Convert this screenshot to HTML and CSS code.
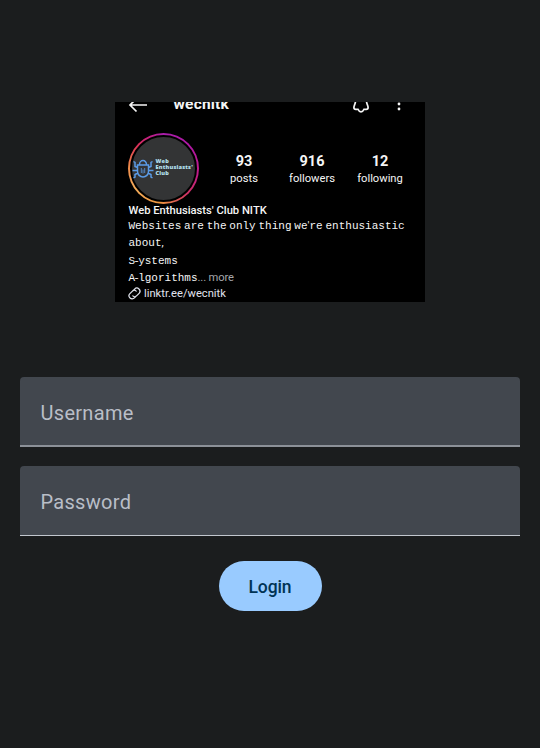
FILE: index.html
```html
<!DOCTYPE html>
<html lang="en">
<head>
<meta charset="utf-8">
<title>Login</title>
<link rel="stylesheet" href="styles.css">
</head>
<body>
<main class="screen">
  <section class="profile">
    <header class="bar">
      <svg class="back" width="20" height="16" viewBox="0 0 20 16"><path d="M19 8H2M8.500 1.500L2 8l6.500 6.500" fill="none" stroke="#f5f5f5" stroke-width="1.700"/></svg>
      <span class="handle">wecnitk</span>
      <svg class="bell" width="18" height="20" viewBox="0 0 18 20"><path d="M3.500 7a5.500 5.500 0 0 1 11 0c0 3 1.600 4.500 1.600 6.500 0 1.200-.8 1.800-1.900 1.800H12c-.7 1.700-1.600 2.500-3 2.500s-2.300-.8-3-2.500H3.800c-1.100 0-1.900-.6-1.900-1.800C1.900 11.500 3.500 10 3.500 7z" fill="none" stroke="#f5f5f5" stroke-width="1.700"/></svg>
      <svg class="dots" width="4" height="16" viewBox="0 0 4 16" fill="#f5f5f5"><circle cx="2" cy="3" r="1.400"/><circle cx="2" cy="8" r="1.400"/><circle cx="2" cy="13" r="1.400"/></svg>
    </header>
    <div class="summary">
      <div class="ring">
        <div class="avatar">
          <svg class="bug" width="22" height="20" viewBox="0 0 22 20" fill="none" stroke="#5b9be6" stroke-width="1.500">
            <path d="M7.500 5.500a3.500 4 0 0 1 7 0M5.500 6h11v6.500a5.500 5.500 0 0 1-11 0zM5.500 8.500L3 7.500V3.500L1.500 2.500M16.500 8.500L19 7.500V3.500l1.500-1M5.500 11.500H.5M16.500 11.500h5M6 14l-3 1.500V18l-1.500 1M16 14l3 1.500V18l1.500 1"/>
            <path d="M9.300 9v5M12.700 9v5M11 10.500v4" stroke-width=".8"/>
          </svg>
          <div class="logo-text"><span>Web</span><span>Enthusiasts'</span><span>Club</span></div>
        </div>
      </div>
      <div class="stat posts"><b>93</b><span>posts</span></div>
      <div class="stat followers"><b>916</b><span>followers</span></div>
      <div class="stat following"><b>12</b><span>following</span></div>
    </div>
    <div class="name">Web Enthusiasts' Club NITK</div>
    <div class="bio">Websites are the only thing we<span class="apos">'</span>re enthusiastic<br>about<span class="apos">,</span><br>S<span class="dash">-</span>ystems<br>A<span class="dash">-</span>lgorithms<span class="more">... more</span></div>
    <div class="link">
      <svg width="13" height="13" viewBox="0 0 13 13" fill="none" stroke="#e4e6ef" stroke-width="1.200" stroke-linecap="round"><path d="M5.300 3.500l1.300-1.400a3 3 0 0 1 4.500 4.200L8.800 8.700a2.900 2.900 0 0 1-4 .2M7.700 9.500l-1.300 1.400a3 3 0 0 1-4.500-4.200l2.300-2.400a2.900 2.900 0 0 1 4-.2"/></svg>
      <span>linktr.ee/wecnitk</span>
    </div>
  </section>
  <form class="form">
    <input class="field" type="text" placeholder="Username" aria-label="Username">
    <input class="field field-password" type="password" placeholder="Password" aria-label="Password">
    <button class="login" type="button">Login</button>
  </form>
</main>
</body>
</html>
```
FILE: styles.css
```css
* { box-sizing: border-box; }
body { margin: 0; background: #1b1d1e; font-family: Roboto, sans-serif; }
.screen { height: 748px; padding: 102px 20px 0; overflow: hidden; }
.profile { width: 310px; height: 200px; margin: 0 auto; padding: 0 13px; background: #000; color: #f5f5f5; overflow: hidden; }
.bar { display: flex; align-items: flex-start; height: 30.5px; }
.bar svg { flex: none; }
.back { margin-top: -5px; }
.handle { width: 56px; margin: -8px 0 0 25.5px; font-size: 15.5px; line-height: 20px; font-weight: 700; letter-spacing: .2px; }
.bell { margin: -8.5px 0 0 122px; }
.dots { margin: -6px 0 0 27px; }
.summary { display: flex; height: 71.5px; }
.ring { flex: none; width: 71px; height: 71px; padding: 2px; border-radius: 50%; background: conic-gradient(#a81eaa 0deg, #b018a4 50deg, #c21c88 100deg, #cf3560 140deg, #ee963f 185deg, #f3ac5b 235deg, #ed8849 275deg, #dc3255 310deg, #c41f82 335deg, #a81eaa 360deg); }
.avatar { display: flex; align-items: center; width: 67px; height: 67px; border: 2px solid #000; border-radius: 50%; background: #333435; }
.bug { flex: none; margin: 1px 0 0 0; }
.logo-text { display: flex; flex-direction: column; margin: 0 0 0 1.5px; color: #b5e0ef; font: 800 5.6px/5.8px "Open Sans", sans-serif; letter-spacing: .2px; white-space: nowrap; }
.stat { display: flex; flex-direction: column; align-items: center; padding-top: 19px; font-size: 11.2px; line-height: 15px; }
.stat b { font-size: 14.5px; line-height: 20px; }
.stat span { margin-top: -.5px; }
.posts { width: 30px; margin-left: 30px; }
.followers { width: 48px; margin-left: 29px; }
.following { width: 48px; margin-left: 20px; }
.name { margin-top: -1px; padding-left: .5px; font-size: 11.2px; line-height: 15px; font-weight: 500; white-space: nowrap; }
.bio { height: 69px; padding-left: .5px; font: 11px/17.4px "Liberation Mono", monospace; word-spacing: -3.8px; white-space: nowrap; }
.apos, .more { font-family: Roboto, sans-serif; line-height: 1; }
.dash { margin: 0 -1.8px; }
.more { color: #a5a7ab; font-size: 11.2px; letter-spacing: -.15px; word-spacing: 0; }
.link { display: flex; align-items: center; height: 13px; gap: 3px; color: #e0e3ee; font-size: 11.2px; }
.form { display: flex; flex-direction: column; align-items: center; margin-top: 75px; }
.field { width: 100%; height: 70px; padding: 3px 20.5px 0; border: 0; border-bottom: 2px solid #8c9198; border-radius: 4px 4px 0 0; background: #42474e; color: #c2c7cf; font: 20px Roboto, sans-serif; letter-spacing: .3px; outline: none; }
.field::placeholder { color: #b9bec7; opacity: 1; }
.field-password { margin-top: 19px; border-bottom: 1px solid #c2c7ce; }
.login { width: 103px; height: 50px; margin-top: 25px; padding-top: 2px; border: 0; border-radius: 25px; background: #99cbff; color: #003355; font: 500 17.5px Roboto, sans-serif; letter-spacing: -.1px; }
```
